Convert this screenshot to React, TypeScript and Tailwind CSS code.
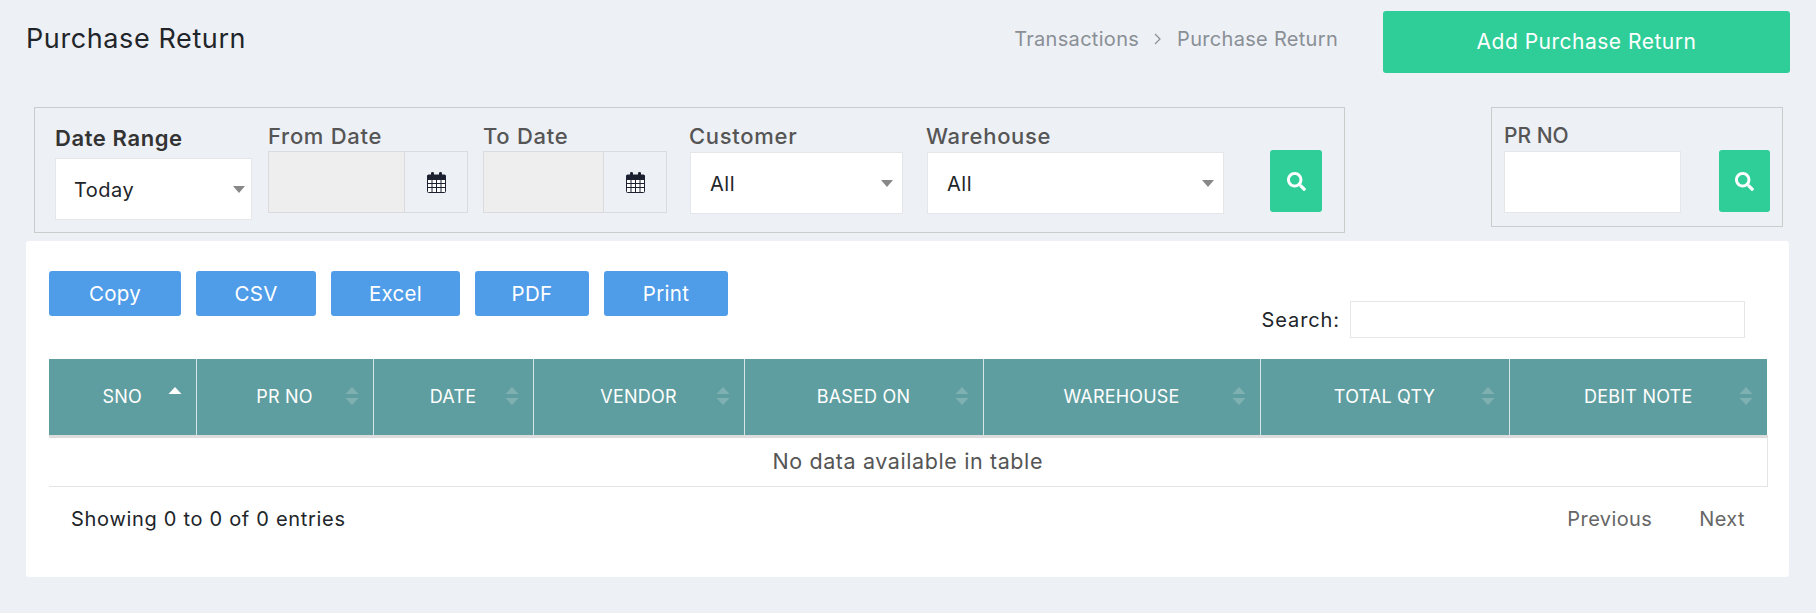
import { FaSearch } from "react-icons/fa";

const columns = [
  { label: "SNO", width: "w-[147px]", active: true },
  { label: "PR NO", width: "w-[177px]" },
  { label: "DATE", width: "w-[160px]" },
  { label: "VENDOR", width: "w-[211px]" },
  { label: "BASED ON", width: "w-[239px]" },
  { label: "WAREHOUSE", width: "w-[277px]" },
  { label: "TOTAL QTY", width: "w-[249px]" },
  { label: "DEBIT NOTE", width: "w-[258px]" },
];

function CalendarIcon() {
  return (
    <svg width="19" height="21" viewBox="0 0 19 21" className="text-[#1c2130]">
      <rect x="0.5" y="3" width="18" height="17.5" rx="1" fill="white" stroke="currentColor" />
      <rect x="0.5" y="3" width="18" height="5" fill="currentColor" />
      <rect x="4" y="0" width="3" height="6" rx="1.2" fill="currentColor" />
      <rect x="12" y="0" width="3" height="6" rx="1.2" fill="currentColor" />
      <path d="M5 8v12M9.500 8v12M14 8v12M1 11.500h17M1 15.500h17" stroke="currentColor" strokeWidth="1" />
    </svg>
  );
}

function Caret() {
  return (
    <svg width="12" height="7" viewBox="0 0 12 7" className="shrink-0">
      <path d="M0 0h12L6 7z" fill="#888888" />
    </svg>
  );
}

function SelectBox({ value, className }: { value: string; className: string }) {
  return (
    <div className={`flex items-center justify-between bg-white border border-[#e4e6e9] h-[62px] ${className}`}>
      <span className="pt-[2px] text-[20px] text-[#212529] tracking-[0.5px]">{value}</span>
      <Caret />
    </div>
  );
}

function DateField({ label, inputWidth }: { label: string; inputWidth: string }) {
  return (
    <div className="flex flex-col">
      <label className="text-[22px] leading-[30px] font-medium text-[#555555] tracking-[0.7px] mt-[13px]">{label}</label>
      <div className="flex h-[62px]">
        <input disabled className={`${inputWidth} h-full bg-[#eeeeee] border border-[#d9dbde]`} />
        <div className="w-[63px] h-full flex items-center justify-center border border-l-0 border-[#d9dbde]">
          <CalendarIcon />
        </div>
      </div>
    </div>
  );
}

function SortIcon({ active }: { active?: boolean }) {
  return (
    <svg width="14" height="18" viewBox="0 0 14 18" className="absolute right-[14px] top-[28px]">
      <path d="M7 0l6.500 7H.500z" fill={active ? "#ffffff" : "#7fb0b2"} />
      {!active && <path d="M7 18l6.500-7H.500z" fill="#7fb0b2" />}
    </svg>
  );
}

function SearchButton({ width }: { width: string }) {
  return (
    <button className={`${width} h-[62px] bg-[#2fce98] rounded-[3px] flex items-center justify-center text-white`}>
      <FaSearch className="text-[19px]" />
    </button>
  );
}

export default function App() {
  return (
    <div className="min-h-screen bg-[#edf0f5] font-['Inter','Liberation_Sans',sans-serif] overflow-hidden">
      {/* header */}
      <div className="flex items-center pt-[11px] pl-[26px] pr-[26px]">
        <h1 className="text-[27px] text-[#212529] tracking-[0.6px] -mt-[5px]">Purchase Return</h1>
        <div className="ml-auto flex items-center text-[20px] text-[#8a8f96] tracking-[0.3px] -mt-[6px]">
          <span>Transactions</span>
          <svg width="10" height="14" viewBox="0 0 10 14" className="mx-[14px]">
            <path d="M2 2l5 5-5 5" fill="none" stroke="#8a8f96" strokeWidth="1.200" />
          </svg>
          <span>Purchase Return</span>
        </div>
        <button className="ml-[45px] w-[407px] h-[62px] bg-[#2fce98] rounded-[3px] text-white text-[21px] font-normal tracking-[0.5px]">
          Add Purchase Return
        </button>
      </div>

      {/* filters */}
      <div className="flex items-start mt-[34px] h-[126px]">
        <div className="ml-[34px] w-[1311px] h-[126px] border border-[#cccccc] flex items-start pl-[20px]">
          <div className="flex flex-col w-[197px]">
            <label className="text-[22px] leading-[30px] font-semibold text-[#333333] tracking-[0.6px] mt-[15px] mb-[5px]">Date Range</label>
            <SelectBox value="Today" className="w-full pl-[18px] pr-[6px]" />
          </div>
          <div className="ml-[16px]">
            <DateField label="From Date" inputWidth="w-[137px]" />
          </div>
          <div className="ml-[15px]">
            <DateField label="To Date" inputWidth="w-[121px]" />
          </div>
          <div className="flex flex-col ml-[23px] w-[213px]">
            <label className="text-[22px] leading-[30px] font-medium text-[#555555] tracking-[0.7px] mt-[13px] mb-[1px] -ml-px">Customer</label>
            <SelectBox value="All" className="w-full pl-[19px] pr-[9px]" />
          </div>
          <div className="flex flex-col ml-[24px] w-[297px]">
            <label className="text-[22px] leading-[30px] font-medium text-[#555555] tracking-[0.7px] mt-[13px] mb-[1px] -ml-px">Warehouse</label>
            <SelectBox value="All" className="w-full pl-[19px] pr-[9px]" />
          </div>
          <div className="ml-[46px] mt-[42px]">
            <SearchButton width="w-[52px]" />
          </div>
        </div>
        <div className="ml-[146px] w-[292px] h-[120px] border border-[#cccccc] flex items-start pl-[12px]">
          <div className="flex flex-col w-[177px]">
            <label className="text-[21px] leading-[30px] font-medium text-[#555555] mt-[13px]">PR NO</label>
            <input className="w-full h-[62px] bg-white border border-[#e4e6e9]" />
          </div>
          <div className="ml-[38px] mt-[42px]">
            <SearchButton width="w-[51px]" />
          </div>
        </div>
      </div>

      {/* table card */}
      <div className="mt-[8px] ml-[26px] w-[1763px] h-[336px] bg-white rounded-[3px] pt-[30px] pl-[23px] pr-[22px]">
        <div className="flex justify-between items-start">
          <div className="flex gap-[15px]">
            {[
              { name: "Copy", w: "w-[132px]" },
              { name: "CSV", w: "w-[120px]" },
              { name: "Excel", w: "w-[129px]" },
              { name: "PDF", w: "w-[114px]" },
              { name: "Print", w: "w-[124px]" },
            ].map((b) => (
              <button key={b.name} className={`${b.w} h-[45px] pt-[2px] bg-[#4f9ce8] rounded-[3px] text-white text-[20.500px] tracking-[0.3px]`}>
                {b.name}
              </button>
            ))}
          </div>
          <div className="flex items-center mt-[30px] mr-[22px]">
            <label className="text-[20px] text-[#212529] tracking-[0.9px] mr-[10px]">Search:</label>
            <input className="w-[395px] h-[37px] bg-white border border-[#e4e6e9]" />
          </div>
        </div>

        <table className="mt-[21px] w-[1718px] table-fixed border-collapse">
          <thead>
            <tr className="h-[77px] bg-[#5f9ea0]">
              {columns.map((c, i) => (
                <th
                  key={c.label}
                  className={`${c.width} relative p-0 text-center text-[18px] font-normal text-white tracking-[0.2px] ${i < columns.length - 1 ? "border-r border-[#d5e5e5]" : ""}`}
                >
                  {c.label}
                  <SortIcon active={c.active} />
                </th>
              ))}
            </tr>
          </thead>
          <tbody>
            <tr className="h-[50px] border-t-[3px] border-[#dddddd] border-b border-b-[#e2e4e6]">
              <td colSpan={8} className="border-r border-[#e2e4e6] text-center text-[21.500px] text-[#555555] tracking-[0.6px]">
                No data available in table
              </td>
            </tr>
          </tbody>
        </table>

        <div className="flex items-center justify-between h-[64px] px-[22px] text-[20px]">
          <span className="text-[#212529] tracking-[0.7px]">Showing 0 to 0 of 0 entries</span>
          <div className="flex gap-[47px] text-[#666666] tracking-[0.4px]">
            <span>Previous</span>
            <span>Next</span>
          </div>
        </div>
      </div>
    </div>
  );
}
